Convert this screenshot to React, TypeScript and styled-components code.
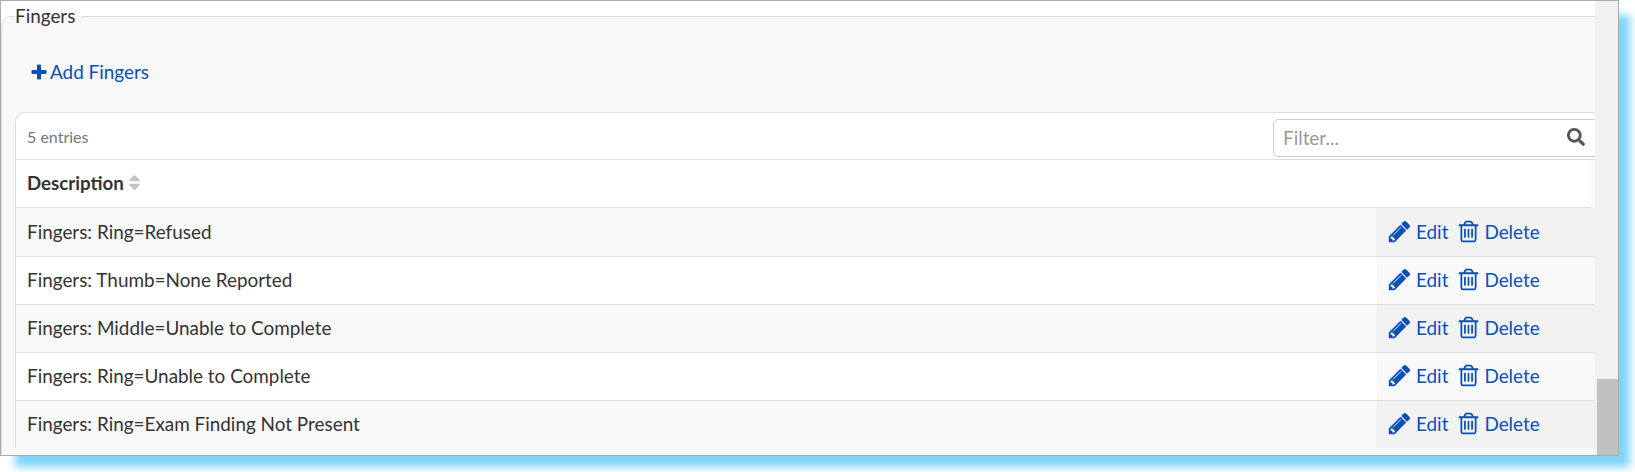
import React from "react";
import styled, { createGlobalStyle } from "styled-components";
import { FaSearch, FaSort } from "react-icons/fa";

const Global = createGlobalStyle`
  html, body { margin: 0; padding: 0; background: #fff; }
  body { font-family: Lato, "Liberation Sans", sans-serif; color: #333; overflow: hidden; }
  * { box-sizing: border-box; }
`;

const Page = styled.div`
  width: 1635px;
  height: 472px;
`;

const Window = styled.div`
  width: 1619px;
  height: 456px;
  display: flex;
  background: #fff;
  border: 1px solid #ababab;
  box-shadow: 13px 13px 8px -2px #7dd6f9;
`;

const Content = styled.div`
  width: 1594px;
  flex: none;
  overflow: hidden;
`;

const Panel = styled.fieldset`
  width: 1680px;
  min-width: 0;
  height: 600px;
  margin: 0;
  padding: 0 13px;
  border: 1px solid #ddd;
  border-radius: 10px 0 0 0;
  background: #f8f8f8;
`;

const PanelTitle = styled.legend`
  padding: 0 6px 0 0;
  font-size: 18.9px;
  line-height: 30px;
  color: #333;
`;

const AddRow = styled.div`
  height: 81px;
  padding: 26px 0 0 16px;
`;

const AddLink = styled.a`
  display: inline-flex;
  align-items: center;
  gap: 3px;
  font-size: 18.9px;
  line-height: 30px;
  color: #0b50b8;
  svg { fill: currentColor; display: block; }
`;

const Card = styled.div`
  border: 1px solid #ddd;
  border-bottom: 0;
  border-radius: 10px 0 0 0;
  overflow: hidden;
`;

const Toolbar = styled.div`
  height: 47px;
  display: flex;
  align-items: center;
  justify-content: space-between;
  background: #fff;
  border-bottom: 1px solid #ddd;
  padding: 0 0 0 11px;
`;

const Count = styled.span`
  font-size: 16px;
  color: #777;
`;

const FilterBox = styled.label`
  width: 360px;
  height: 38px;
  margin: 4px 33px 0 0;
  display: flex;
  align-items: center;
  justify-content: space-between;
  padding: 0 47px 2px 9px;
  border: 1px solid #ccc;
  border-radius: 5px;
  background: #fff;
  font-size: 18.9px;
  color: #999;
  svg { color: #555; font-size: 18px; }
`;

const HeadRow = styled.div`
  width: 1575px;
  height: 48px;
  display: flex;
  align-items: center;
  gap: 1px;
  padding: 0 0 2px 11px;
  background: #fff;
  border-bottom: 1px solid #ddd;
  font-size: 18.7px;
  font-weight: 700;
  svg { color: #c4c4c4; font-size: 19px; }
`;

const Row = styled.div<{ $odd: boolean; $tall: boolean; $last: boolean }>`
  height: ${(p) => (p.$last ? 47 : p.$tall ? 49 : 48)}px;
  display: flex;
  background: ${(p) => (p.$odd ? "#f9f9f9" : "#fff")};
  border-bottom: ${(p) => (p.$last ? "0" : "1px solid #ddd")};
  font-size: 18.9px;
`;

const Description = styled.div`
  width: 1361px;
  flex: none;
  display: flex;
  align-items: center;
  padding: 0 0 2px 11px;
`;

const Actions = styled.div<{ $odd: boolean }>`
  width: 218px;
  flex: none;
  display: flex;
  align-items: center;
  padding: 0 0 2px 10px;
  background: ${(p) => (p.$odd ? "#f2f2f2" : "#f9f9f9")};
`;

const ActionLink = styled.a<{ $gap: number }>`
  display: inline-flex;
  align-items: center;
  gap: ${(p) => p.$gap}px;
  margin-right: 8px;
  color: #0b50b8;
  svg { fill: currentColor; display: block; }
`;

const Scrollbar = styled.div`
  flex: 1;
  display: flex;
  flex-direction: column;
  justify-content: flex-end;
  background: #f1f1f1;
  padding-left: 2px;
`;

const Thumb = styled.div`
  height: 76px;
  background: #c1c1c1;
`;

const Plus = () => (
  <svg width="16" height="16" viewBox="0 0 16 16">
    <path d="M6 1.5a1 1 0 0 1 1-1h2a1 1 0 0 1 1 1V6h4.5a1 1 0 0 1 1 1v2a1 1 0 0 1-1 1H10v4.5a1 1 0 0 1-1 1H7a1 1 0 0 1-1-1V10H1.5a1 1 0 0 1-1-1V7a1 1 0 0 1 1-1H6z" />
  </svg>
);

const Pencil = () => (
  <svg width="25" height="25" viewBox="0 0 1792 1792">
    <path d="M491 1536l91-91-235-235-91 91v107h128v128h107zm523-928q0-22-22-22-10 0-17 7l-542 542q-7 7-7 17 0 22 22 22 10 0 17-7l542-542q7-7 7-17zm-54-192l416 416-832 832h-416v-416zm683 96q0 53-37 90l-166 166-416-416 166-165q36-38 90-38 53 0 91 38l235 234q37 39 37 91z" />
  </svg>
);

const Trash = () => (
  <svg width="25" height="25" viewBox="0 0 1792 1792">
    <path d="M704 736v576q0 14-9 23t-23 9h-64q-14 0-23-9t-9-23v-576q0-14 9-23t23-9h64q14 0 23 9t9 23zm256 0v576q0 14-9 23t-23 9h-64q-14 0-23-9t-9-23v-576q0-14 9-23t23-9h64q14 0 23 9t9 23zm256 0v576q0 14-9 23t-23 9h-64q-14 0-23-9t-9-23v-576q0-14 9-23t23-9h64q14 0 23 9t9 23zm128 724v-948h-896v948q0 22 7 40.5t14.5 27 10.5 8.5h832q3 0 10.5-8.5t14.5-27 7-40.5zm-672-1076h448l-48-117q-7-9-17-11h-317q-10 2-17 11zm928 32v64q0 14-9 23t-23 9h-96v948q0 83-47 143.5t-113 60.5h-832q-66 0-113-58.5t-47-141.5v-952h-96q-14 0-23-9t-9-23v-64q0-14 9-23t23-9h309l70-167q15-37 54-63t79-26h320q40 0 79 26t54 63l70 167h309q14 0 23 9t9 23z" />
  </svg>
);

const rows = [
  "Fingers: Ring=Refused",
  "Fingers: Thumb=None Reported",
  "Fingers: Middle=Unable to Complete",
  "Fingers: Ring=Unable to Complete",
  "Fingers: Ring=Exam Finding Not Present",
];

export default function App() {
  return (
    <Page>
      <Global />
      <Window>
        <Content>
          <Panel>
            <PanelTitle>Fingers</PanelTitle>
            <AddRow>
              <AddLink>
                <Plus />
                Add Fingers
              </AddLink>
            </AddRow>
            <Card>
              <Toolbar>
                <Count>5 entries</Count>
                <FilterBox>
                  Filter...
                  <FaSearch />
                </FilterBox>
              </Toolbar>
              <HeadRow>
                Description
                <FaSort />
              </HeadRow>
              {rows.map((text, i) => (
                <Row key={text} $odd={i % 2 === 0} $tall={i === 0} $last={i === rows.length - 1}>
                  <Description>{text}</Description>
                  <Actions $odd={i % 2 === 0}>
                    <ActionLink $gap={4}>
                      <Pencil />
                      Edit
                    </ActionLink>
                    <ActionLink $gap={3}>
                      <Trash />
                      Delete
                    </ActionLink>
                  </Actions>
                </Row>
              ))}
            </Card>
          </Panel>
        </Content>
        <Scrollbar>
          <Thumb />
        </Scrollbar>
      </Window>
    </Page>
  );
}
